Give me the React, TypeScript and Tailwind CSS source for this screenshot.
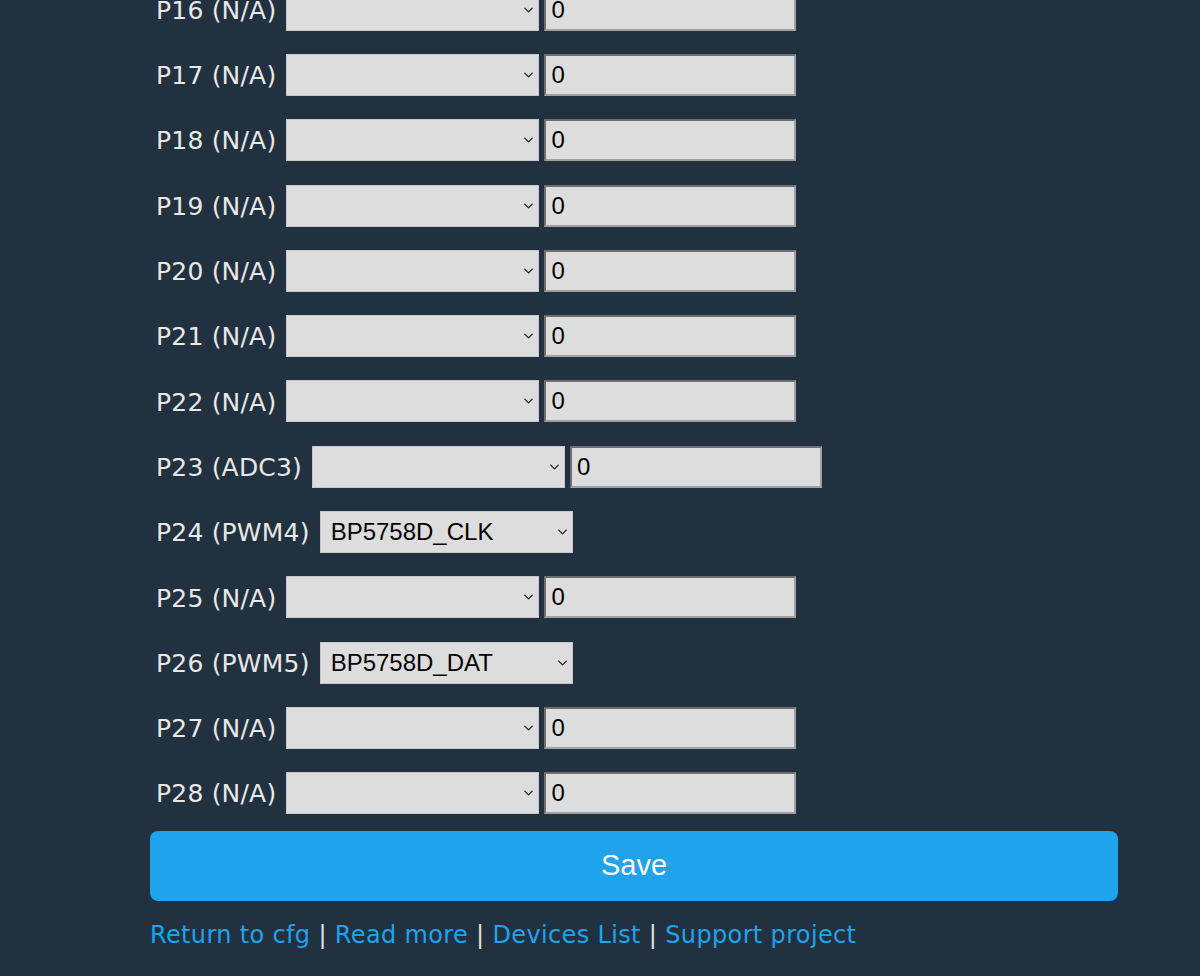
import { ChevronDown } from "lucide-react"

type Pin = {
  label: string
  role?: string
  input: boolean
}

const pins: Pin[] = [
  { label: "P16 (N/A)", input: true },
  { label: "P17 (N/A)", input: true },
  { label: "P18 (N/A)", input: true },
  { label: "P19 (N/A)", input: true },
  { label: "P20 (N/A)", input: true },
  { label: "P21 (N/A)", input: true },
  { label: "P22 (N/A)", input: true },
  { label: "P23 (ADC3)", input: true },
  { label: "P24 (PWM4)", role: "BP5758D_CLK", input: false },
  { label: "P25 (N/A)", input: true },
  { label: "P26 (PWM5)", role: "BP5758D_DAT", input: false },
  { label: "P27 (N/A)", input: true },
  { label: "P28 (N/A)", input: true },
]

function PinRow({ pin }: { pin: Pin }) {
  return (
    <div className="flex h-[65.3px] items-center">
      <span className="ml-[6px] mr-[10px] whitespace-pre pt-[2px] text-[25px] tracking-[0.2px] text-[#e8e8e8]">
        {pin.label}
      </span>
      <div className="relative">
        <select
          defaultValue={pin.role ?? ""}
          className="h-[42px] w-[253px] appearance-none border border-[#c8c8c8] bg-[#dddddd] pl-[10px] text-[24px] text-black outline-none"
          style={{ fontFamily: '"Liberation Sans", Arial, sans-serif' }}
        >
          <option value=""></option>
          {pin.role && <option value={pin.role}>{pin.role}</option>}
        </select>
        <ChevronDown
          className="pointer-events-none absolute right-[3px] top-1/2 h-[15px] w-[15px] -translate-y-1/2 text-[#222]"
          strokeWidth={2.2}
        />
      </div>
      {pin.input && (
        <input
          defaultValue="0"
          className="ml-[5px] h-[42px] w-[252px] border-2 border-b-[#a0a0a0] border-l-[#6e6e6e] border-r-[#a0a0a0] border-t-[#6e6e6e] bg-[#dddddd] px-[5px] text-[24px] text-black outline-none"
          style={{ fontFamily: '"Liberation Sans", Arial, sans-serif' }}
        />
      )}
    </div>
  )
}

export default function App() {
  return (
    <div
      className="h-[976px] overflow-hidden bg-[#223140]"
      style={{ fontFamily: '"DejaVu Sans", Verdana, sans-serif' }}
    >
      <div className="-mt-[23px] w-[1118px] pl-[150px]">
        {pins.map((pin) => (
          <PinRow key={pin.label} pin={pin} />
        ))}
        <button
          className="mt-[5px] h-[70px] w-full rounded-[8px] bg-[#1fa3ec] text-[29px] text-white"
          style={{ fontFamily: '"Liberation Sans", Arial, sans-serif' }}
        >
          Save
        </button>
        <div className="mt-[16px] text-[24px] tracking-[0.35px] text-[#e0e0e0]">
          <a className="text-[#1fa3ec]">Return to cfg</a> | <a className="text-[#1fa3ec]">Read more</a> |{" "}
          <a className="text-[#1fa3ec]">Devices List</a> | <a className="text-[#1fa3ec]">Support project</a>
        </div>
      </div>
    </div>
  )
}
